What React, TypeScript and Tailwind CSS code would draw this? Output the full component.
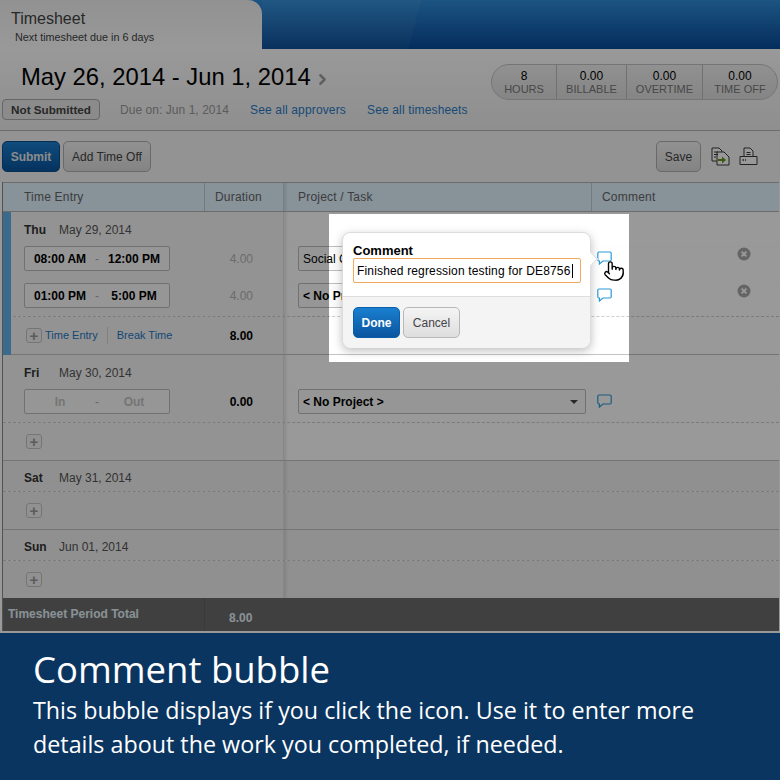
import React from 'react';
import { ChevronRight, Pointer } from 'lucide-react';

const BubbleIcon = ({ className = '' }: { className?: string }) => (
  <svg width="15" height="14" viewBox="0 0 15 14" fill="none" className={className}>
    <path
      d="M2 1h11a1.2 1.2 0 0 1 1.2 1.2v6.6A1.2 1.2 0 0 1 13 10H6l-3.6 3V10H2A1.2 1.2 0 0 1 .8 8.8V2.2A1.2 1.2 0 0 1 2 1z"
      stroke="#2b9ad8"
      strokeWidth="1.2"
      fill="#fff"
    />
  </svg>
);

const DeleteIcon = () => (
  <svg width="14" height="14" viewBox="0 0 14 14">
    <circle cx="7" cy="7" r="6.5" fill="#a8a8a8" />
    <path d="M4.6 4.6l4.8 4.8M9.4 4.6l-4.8 4.8" stroke="#fff" strokeWidth="2" />
  </svg>
);

const ExportIcon = () => (
  <svg width="19" height="19" viewBox="0 0 19 19" fill="none">
    <path d="M1 1h7l3 3v10H1z" fill="#fff" stroke="#3a3a3a" />
    <path d="M6 5h7l5 5v8H6z" fill="#fff" stroke="#3a3a3a" />
    <path d="M3 5h4M3 7.5h4M3 10h2" stroke="#3a3a3a" />
    <path d="M7 12h4V9.5l4 3.5-4 3.500V14H7z" fill="#5f9c1c" />
  </svg>
);

const PrintIcon = () => (
  <svg width="19" height="19" viewBox="0 0 19 19" fill="none">
    <path d="M5 9V1h6l3 3v5" fill="#fff" stroke="#3a3a3a" />
    <path d="M7.500 5.500h4M7.500 7.500h4" stroke="#3a3a3a" />
    <path d="M1 9.500h17v8H1z" fill="#fff" stroke="#3a3a3a" />
    <path d="M3.500 13h1.500M6 13h1" stroke="#3a3a3a" strokeWidth="1.400" />
  </svg>
);

const PlusButton = () => (
  <div className="w-4 h-[15px] flex items-center justify-center rounded-[3px] border border-[#c4c4c4] bg-[#f2f2f2] text-[#999] text-[15px] font-bold leading-none">
    +
  </div>
);

const TimeBox = ({ from, to, empty }: { from: string; to: string; empty?: boolean }) => (
  <div
    className={`w-[146px] h-[25px] grid grid-cols-[1fr_auto_1fr] items-center text-center text-xs font-bold rounded-[2px] border border-[#bdbdbd] bg-[#fbfbfb] ${
      empty ? 'text-[#c4c4c4]' : 'text-black'
    }`}
  >
    <span>{from}</span>
    <span className="font-normal text-[#aaa]">-</span>
    <span>{to}</span>
  </div>
);

const ProjectSelect = ({ label, bold }: { label: string; bold?: boolean }) => (
  <div
    className={`w-[288px] h-[25px] flex items-center justify-between pl-[4px] pr-[7px] text-xs text-black rounded-[2px] border border-[#bdbdbd] bg-[#fbfbfb] ${
      bold ? 'font-bold' : ''
    }`}
  >
    <span>{label}</span>
    <span className="w-0 h-0 border-x-[4px] border-x-transparent border-t-[4px] border-t-[#444]" />
  </div>
);

type RowProps = {
  height: string;
  time?: React.ReactNode;
  duration?: React.ReactNode;
  project?: React.ReactNode;
  comment?: boolean;
  remove?: boolean;
  line?: string;
  shade?: boolean;
};

// one line of the grid, left two columns are shaded
const Row = ({ height, time, duration, project, comment, remove, line = '', shade }: RowProps) => (
  <div className={`grid grid-cols-[202px_79px_1fr] ${height} ${line}`}>
    <div className={`pl-[21px] flex items-start ${shade ? 'bg-[#f0f0f0]' : 'bg-[#f5f5f5]'}`}>{time}</div>
    <div className={`border-r border-[#e2e2e2] ${shade ? 'bg-[#f0f0f0]' : 'bg-[#f5f5f5]'}`}>{duration}</div>
    <div className={`flex items-start pl-[14px] shadow-[inset_4px_0_3px_-2px_rgba(0,0,0,0.1)] ${shade ? 'bg-[#f0f0f0]' : ''}`}>
      {project}
      {comment && <BubbleIcon className="ml-[11px] mt-[5px]" />}
      {remove && (
        <div className="ml-[125px] mt-[1px]">
          <DeleteIcon />
        </div>
      )}
    </div>
  </div>
);

const DayLabel = ({ day, date, pad }: { day: string; date: string; pad: string }) => (
  <div className={`h-full flex items-center text-xs ${pad}`}>
    <span className="w-[35px] font-bold text-[#333]">{day}</span>
    <span className="text-[#555]">{date}</span>
  </div>
);

const Duration = ({ value, strong }: { value: string; strong?: boolean }) => (
  <div className={`h-[25px] flex items-center justify-end pr-[30px] text-xs ${strong ? 'font-bold text-black' : 'text-[#b4b4b4]'}`}>
    {value}
  </div>
);

const dashed = 'border-b border-dashed border-[#cfcfcf]';
const solid = 'border-b border-[#c4c4c4]';

const AddRow = ({ line, links, shade }: { line: string; links?: boolean; shade?: boolean }) => (
  <Row
    height="h-[38px]"
    line={line}
    shade={shade}
    time={
      <div className="h-full flex items-center pl-[2px] text-[11px] text-[#1f78c4]">
        <PlusButton />
        {links && (
          <>
            <span className="ml-[3px]">Time Entry</span>
            <span className="ml-[9px] w-px h-[17px] bg-[#d8d8d8]" />
            <span className="ml-[9px]">Break Time</span>
          </>
        )}
      </div>
    }
    duration={
      links ? (
        <div className="h-[37px] flex items-center">
          <div className="w-full">
            <Duration value="8.00" strong />
          </div>
        </div>
      ) : undefined
    }
  />
);

const Stat = ({ value, label, width }: { value: string; label: string; width: string }) => (
  <div className={`${width} flex flex-col items-center justify-center border-r border-[#bcbcbc] last:border-r-0`}>
    <span className="text-xs leading-[14px] text-black">{value}</span>
    <span className="text-[11px] leading-[13px] text-[#777]">{label}</span>
  </div>
);

const App = () => {
  return (
    <div className="w-[780px] h-[780px] flex flex-col bg-white font-['Liberation_Sans',sans-serif]">
      <div className="relative h-[633px] overflow-hidden bg-white">
        {/* Top tab bar */}
        <div className="h-[49px] flex bg-[linear-gradient(180deg,#308dd9,#074b99)]">
          <div className="w-[262px] pl-[11px] pt-[10px] rounded-tr-[14px] bg-[linear-gradient(180deg,#f3f3f3,#ffffff)]">
            <div className="text-base leading-[18px] text-[#444]">Timesheet</div>
            <div className="ml-1 mt-[3px] text-[10.8px] leading-[13px] text-[#444]">Next timesheet due in 6 days</div>
          </div>
          <div className="flex-1 bg-[linear-gradient(105deg,rgba(255,255,255,0.04)_0%,rgba(255,255,255,0.04)_30%,transparent_30%)]" />
        </div>

        {/* Period header */}
        <div className="h-[82px] flex justify-between border-b border-[#b8b8b8] bg-[linear-gradient(180deg,#ffffff,#eeeeee)]">
          <div>
            <div className="mt-[14px] ml-[21px] h-[28px] flex items-center text-[23.8px] text-black">
              May 26, 2014 - Jun 1, 2014
              <ChevronRight size={17} strokeWidth={3.5} className="ml-[3px] mt-[5px] text-[#a0a0a0]" />
            </div>
            <div className="mt-[8px] ml-[2px] flex items-center text-xs tracking-[0.15px]">
              <div className="w-[98px] h-[21px] flex items-center justify-center rounded-[4px] border border-[#ababab] bg-[#e8e8e8] font-bold text-[11.7px] tracking-normal text-[#444]">
                Not Submitted
              </div>
              <span className="ml-[20px] text-[#999] tracking-[0.05px]">Due on: Jun 1, 2014</span>
              <a className="ml-[21px] text-[#2b7cc7]">See all approvers</a>
              <a className="ml-[21px] text-[#2b7cc7]">See all timesheets</a>
            </div>
          </div>
          <div className="mt-[15px] mr-[2px] w-[287px] h-[36px] flex rounded-[18px] border border-[#c4c4c4] bg-[linear-gradient(180deg,#f2f2f2,#dedede)]">
            <Stat value="8" label="HOURS" width="w-[65px]" />
            <Stat value="0.00" label="BILLABLE" width="w-[70px]" />
            <Stat value="0.00" label="OVERTIME" width="w-[76px]" />
            <Stat value="0.00" label="TIME OFF" width="flex-1" />
          </div>
        </div>

        {/* Toolbar */}
        <div className="h-[51px] flex items-center pl-[2px] pr-[21px] bg-[#f5f5f5] text-xs">
          <button className="w-[58px] h-[31px] rounded-[5px] border border-[#0b4f8c] bg-[linear-gradient(180deg,#1a7fd0,#0a559f)] font-bold text-[#e8e8e8]">
            Submit
          </button>
          <button className="ml-[3px] w-[88px] h-[31px] rounded-[5px] border border-[#b0b0b0] bg-[linear-gradient(180deg,#f2f2f2,#dcdcdc)] text-[#444]">
            Add Time Off
          </button>
          <button className="ml-auto w-[45px] h-[31px] rounded-[5px] border border-[#b0b0b0] bg-[linear-gradient(180deg,#f2f2f2,#dcdcdc)] text-[#444]">
            Save
          </button>
          <div className="ml-[10px] mr-px flex gap-[9px]">
            <ExportIcon />
            <PrintIcon />
          </div>
        </div>

        {/* Table */}
        <div className="ml-[2px] mr-px border-l border-[#8a8a8a]">
          <div className="h-[30px] grid grid-cols-[202px_79px_308px_1fr] items-center border-y border-[#b4b4b4] bg-[#e1f3ff] text-xs tracking-[0.2px] text-[#666]">
            <div className="h-full flex items-center pl-[21px] border-r border-[#c0ccd4]">Time Entry</div>
            <div className="h-full flex items-center pl-[10px] border-r border-[#c8d4dc]">Duration</div>
            <div className="h-full flex items-center pl-[14px] border-r border-[#c0ccd4] shadow-[inset_4px_0_3px_-2px_rgba(0,0,0,0.1)]">Project / Task</div>
            <div className="pl-[10px]">Comment</div>
          </div>

          <div className="relative">
            <div className="absolute left-0 top-0 bottom-0 w-2 bg-[#62b3ec]" />
            <Row height="h-[34px]" time={<DayLabel day="Thu" date="May 29, 2014" pad="pt-[1px]" />} />
            <Row
              height="h-[37px]"
              time={<TimeBox from="08:00 AM" to="12:00 PM" />}
              duration={<Duration value="4.00" />}
              project={<ProjectSelect label="Social C" />}
              comment
              remove
            />
            <Row
              height="h-[34px]"
              line={dashed}
              time={<TimeBox from="01:00 PM" to="5:00 PM" />}
              duration={<Duration value="4.00" />}
              project={<ProjectSelect label="< No Project >" bold />}
              comment
              remove
            />
            <AddRow line={solid} links />
          </div>

          <Row height="h-[34px]" time={<DayLabel day="Fri" date="May 30, 2014" pad="pt-[2px]" />} />
          <Row
            height="h-[34px]"
            line={dashed}
            time={<TimeBox from="In" to="Out" empty />}
            duration={<Duration value="0.00" strong />}
            project={<ProjectSelect label="< No Project >" bold />}
            comment
          />
          <AddRow line={solid} />

          <Row height="h-[31px]" line={dashed} shade time={<DayLabel day="Sat" date="May 31, 2014" pad="pt-[4px]" />} />
          <AddRow line={solid} shade />

          <Row height="h-[31px]" line={dashed} shade time={<DayLabel day="Sun" date="Jun 01, 2014" pad="pt-[4px]" />} />
          <Row
            height="h-[37px]"
            shade
            time={
              <div className="h-full flex items-center pl-[2px]">
                <PlusButton />
              </div>
            }
          />

          <div className="h-[33px] grid grid-cols-[202px_1fr] bg-[#6c6c6c] text-xs font-bold text-[#e4f2fa]">
            <div className="pl-[5px] pt-[8px] border-r border-[#626262]">Timesheet Period Total</div>
            <div className="pl-[24px] pt-[12px]">8.00</div>
          </div>
        </div>

        {/* Dimmed page with a lit window round the comment popover */}
        <div className="absolute left-[329px] top-[214px] w-[300px] h-[148px] shadow-[0_0_0_1000px_rgba(0,0,0,0.4)]">
          <div className="absolute left-[13px] top-[18px] w-[249px] h-[116px] rounded-[8px] border border-[#dcdcdc] bg-white shadow-[0_3px_10px_rgba(0,0,0,0.25)]">
            <span className="absolute -right-[6px] top-[21px] w-[10px] h-[10px] rotate-45 bg-white border-t border-r border-[#dcdcdc]" />
            <div className="h-[64px] pl-[10px] pt-[10px] border-b border-[#dedede]">
              <div className="text-[13px] leading-[15px] font-bold text-black">Comment</div>
              <div className="w-[228px] h-[25px] flex items-center pl-[3px] rounded-[2px] border border-[#f2a95c] text-xs tracking-[0.16px] text-black">
                Finished regression testing for DE8756
                <span className="ml-px w-px h-[14px] bg-black" />
              </div>
            </div>
            <div className="h-[51px] flex items-start gap-[3px] pl-[10px] pt-[10px] rounded-b-[8px] bg-[#f4f4f4] text-xs">
              <button className="w-[47px] h-[31px] rounded-[5px] border border-[#0b5fa8] bg-[linear-gradient(180deg,#1a7fd0,#0a559f)] font-bold text-white">
                Done
              </button>
              <button className="w-[57px] h-[31px] rounded-[5px] border border-[#b8b8b8] bg-[linear-gradient(180deg,#f4f4f4,#dedede)] text-[#444]">
                Cancel
              </button>
            </div>
          </div>
          <Pointer size={22} strokeWidth={1.5} className="absolute left-[274px] top-[46px] fill-white text-black" />
        </div>
      </div>

      {/* Caption */}
      <div className="flex-1 bg-[#0a3560] pl-[33px] pt-[13px] font-['Open_Sans',sans-serif] text-white">
        <div className="text-[36.500px] leading-[46px] font-medium">Comment bubble</div>
        <div className="text-[23.300px] leading-[34px] mt-[1px]">
          This bubble displays if you click the icon. Use it to enter more
          <br />
          details about the work you completed, if needed.
        </div>
      </div>
    </div>
  );
};

export default App;
